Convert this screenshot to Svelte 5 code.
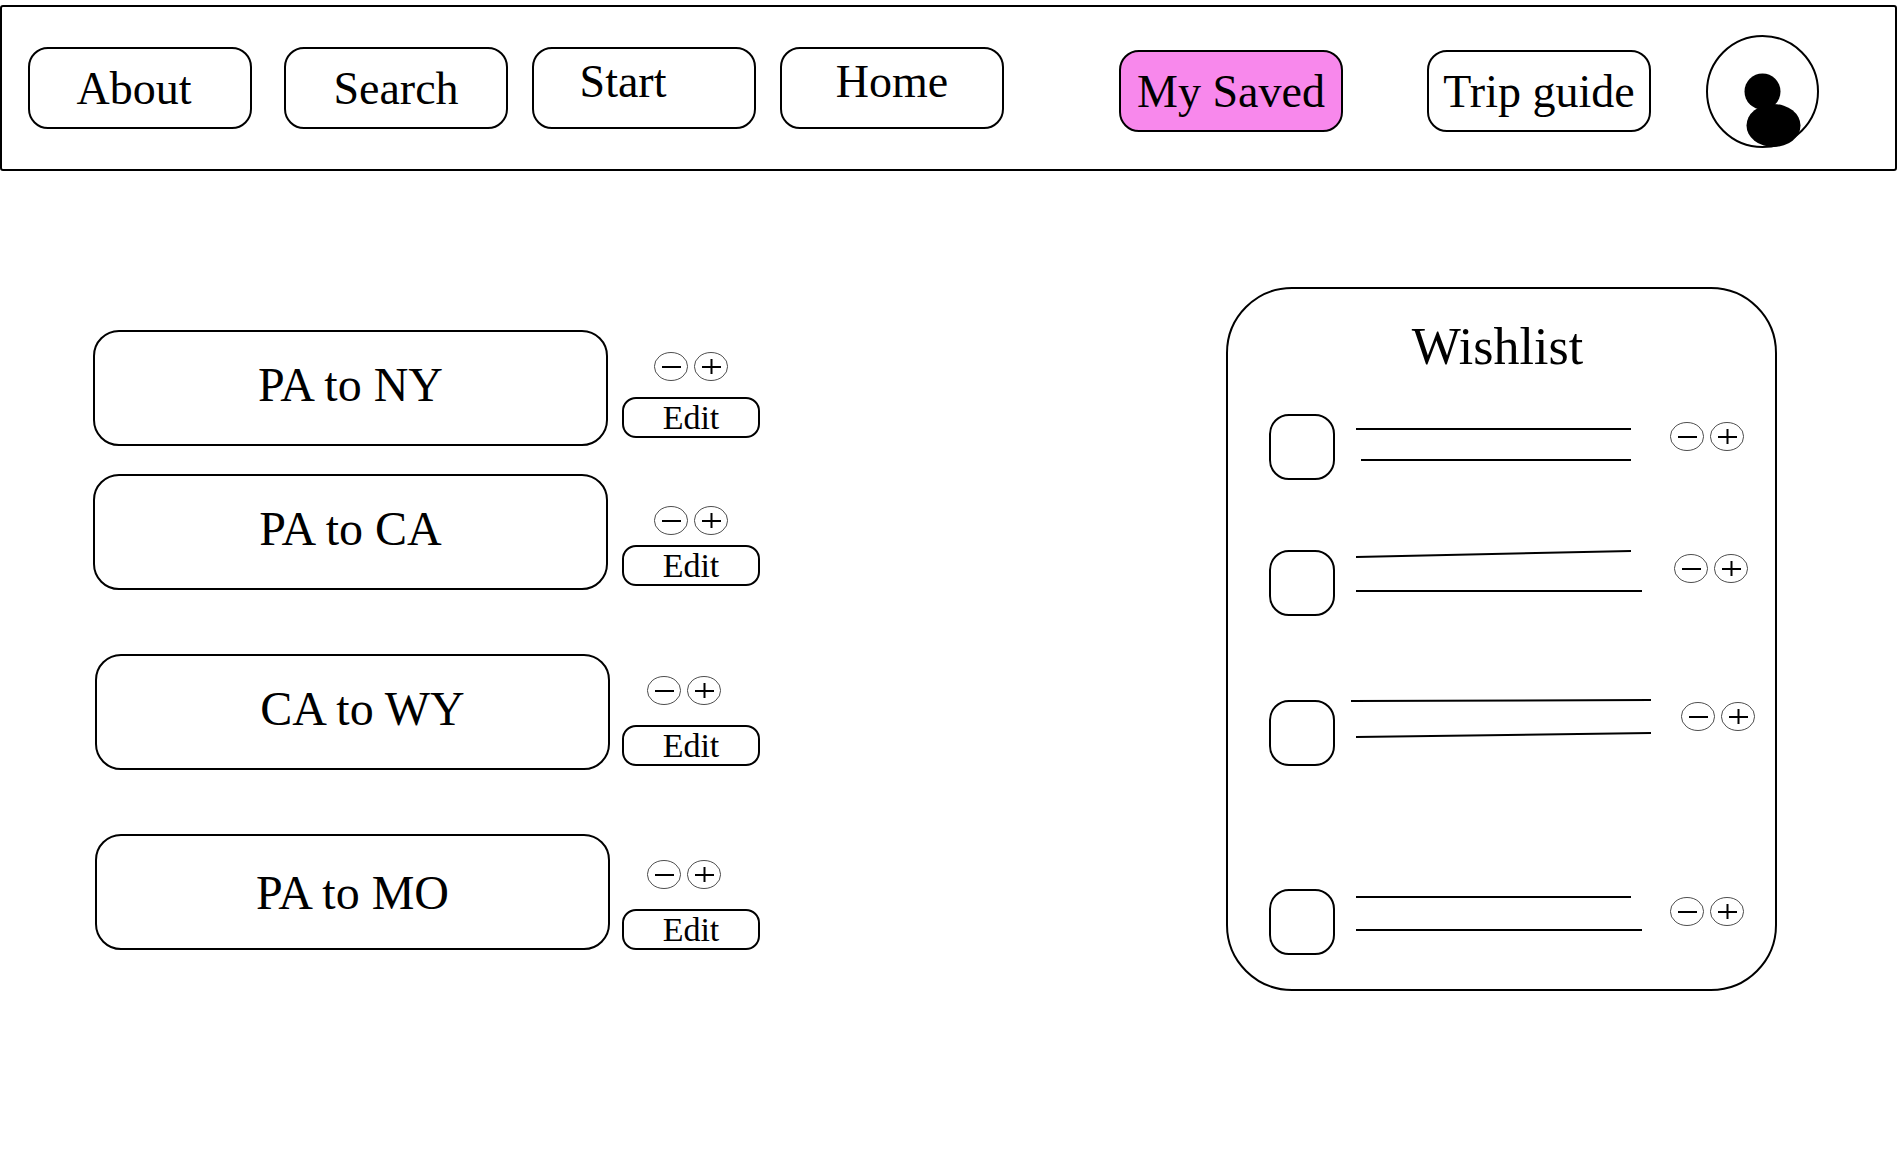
<!-- Saved trips page: route list on the left, wishlist on the right -->

<script lang="ts">
  interface NavItem {
    id: string;
    label: string;
  }

  interface Line {
    x1: number;
    y1: number;
    x2: number;
    y2: number;
  }

  interface WishItem {
    id: number;
    checked: boolean;
    lines: Line[];
  }

  const mainNav: NavItem[] = [
    { id: 'about', label: 'About' },
    { id: 'search', label: 'Search' },
    { id: 'start', label: 'Start' },
    { id: 'home', label: 'Home' }
  ];

  const tripNav: NavItem[] = [
    { id: 'saved', label: 'My Saved' },
    { id: 'guide', label: 'Trip guide' }
  ];

  const trips = ['PA to NY', 'PA to CA', 'CA to WY', 'PA to MO'];

  let activeItem = $state('saved');

  // Placeholder strokes, in the 304x66 box next to each checkbox
  let wishes = $state<WishItem[]>([
    { id: 1, checked: false, lines: [{ x1: 6, y1: 15, x2: 281, y2: 15 }, { x1: 11, y1: 46, x2: 281, y2: 46 }] },
    { id: 2, checked: false, lines: [{ x1: 6, y1: 7, x2: 281, y2: 1 }, { x1: 6, y1: 41, x2: 292, y2: 41 }] },
    { id: 3, checked: false, lines: [{ x1: 1, y1: 1, x2: 301, y2: 0 }, { x1: 6, y1: 37, x2: 301, y2: 33 }] },
    { id: 4, checked: false, lines: [{ x1: 6, y1: 8, x2: 281, y2: 8 }, { x1: 6, y1: 41, x2: 292, y2: 41 }] }
  ]);
</script>

{#snippet stepper(name: string)}
  <div class="stepper">
    <button class="step" aria-label={'Remove ' + name}>
      <svg viewBox="0 0 34 29" aria-hidden="true">
        <ellipse cx="17" cy="14.5" rx="16.6" ry="14" />
        <path d="M8 15h19" />
      </svg>
    </button>
    <button class="step" aria-label={'Add ' + name}>
      <svg viewBox="0 0 34 29" aria-hidden="true">
        <ellipse cx="17" cy="14.5" rx="16.6" ry="14" />
        <path d="M8 15h19M17.5 7v15" />
      </svg>
    </button>
  </div>
{/snippet}

{#snippet navLink(item: NavItem)}
  <a
    class="nav-link {item.id}"
    class:active={activeItem === item.id}
    href={'#' + item.id}
    onclick={() => (activeItem = item.id)}
  >{item.label}</a>
{/snippet}

<header class="topbar">
  <nav class="nav-group" aria-label="Main">
    {#each mainNav as item}
      {@render navLink(item)}
    {/each}
  </nav>
  <nav class="nav-group trip-nav" aria-label="Trips">
    {#each tripNav as item}
      {@render navLink(item)}
    {/each}
  </nav>
  <button class="avatar" aria-label="Profile">
    <svg viewBox="0 0 113 113" aria-hidden="true">
      <circle cx="56.5" cy="56.5" r="55.5" fill="#fff" stroke="#000" stroke-width="2" />
      <circle cx="56.5" cy="56.5" r="18" />
      <ellipse cx="67.5" cy="90.5" rx="27" ry="21.5" />
    </svg>
  </button>
</header>

<main>
  <ul class="trips">
    {#each trips as trip}
      <li class="trip">
        <button class="trip-name">{trip}</button>
        <div class="trip-actions">
          {@render stepper(trip)}
          <button class="edit">Edit</button>
        </div>
      </li>
    {/each}
  </ul>

  <section class="wishlist">
    <h2>Wishlist</h2>
    <ul>
      {#each wishes as wish (wish.id)}
        <li class="wish">
          <input type="checkbox" bind:checked={wish.checked} aria-label={'Wish ' + wish.id} />
          <svg class="wish-lines" viewBox="0 0 304 66" preserveAspectRatio="none" aria-hidden="true">
            {#each wish.lines as line}
              <line {...line} />
            {/each}
          </svg>
          {@render stepper('wish ' + wish.id)}
        </li>
      {/each}
    </ul>
  </section>
</main>

<style>
  :global(body) {
    background: #fff;
    color: #000;
    font-family: "Liberation Serif", "Times New Roman", serif;
  }

  button, a, input { box-sizing: border-box; }

  button {
    padding: 0;
    background: #fff;
    color: inherit;
    font-family: inherit;
    cursor: pointer;
  }

  ul {
    list-style: none;
    margin: 0;
    padding: 0;
  }

  /* Top bar */
  .topbar {
    display: flex;
    align-items: center;
    box-sizing: border-box;
    height: 166px;
    margin-top: 5px;
    padding: 0 76px 0 26px;
    border: 2px solid #000;
    border-radius: 3px;
  }

  .nav-group {
    display: flex;
    flex: 0 1 976px;
    gap: 24px;
  }

  .trip-nav {
    flex-basis: 532px;
    gap: 84px;
    margin-left: auto;
    margin-top: 6px;
  }

  .nav-link {
    display: flex;
    align-items: center;
    justify-content: center;
    flex: 0 1 224px;
    height: 82px;
    border: 2px solid #000;
    border-radius: 20px;
    color: inherit;
    font-size: 46px;
    text-decoration: none;
    white-space: nowrap;
  }

  .nav-link.about {
    margin-right: 8px;
    padding-right: 12px;
  }

  .nav-link.start, .nav-link.home { padding-bottom: 14px; }

  .nav-link.start { padding-right: 42px; }

  .nav-link.active { background: #f888ec; }

  .avatar {
    flex: none;
    width: 113px;
    height: 113px;
    margin-left: 55px;
    margin-top: 6px;
    border: none;
    border-radius: 50%;
  }

  .avatar svg { display: block; }

  /* Page body */
  main {
    display: flex;
    align-items: flex-start;
    justify-content: space-between;
    padding: 116px 120px 60px 93px;
  }

  .trips {
    flex: 0 1 667px;
    padding-top: 43px;
  }

  .trip {
    display: flex;
    gap: 14px;
  }

  .trip + .trip { margin-top: 64px; }
  .trip:nth-child(2) { margin-top: 28px; }

  .trip:nth-child(n + 3) {
    gap: 12px;
    padding-left: 2px;
  }

  .trip-name {
    flex: 1;
    height: 116px;
    border: 2px solid #000;
    border-radius: 26px;
    font-size: 48px;
  }

  .trip:nth-child(-n + 3) .trip-name { padding-bottom: 8px; }
  .trip:nth-child(3) .trip-name { padding-left: 20px; }

  .trip-actions {
    display: flex;
    flex-direction: column;
    align-items: center;
    justify-content: flex-end;
    gap: 20px;
    width: 138px;
    padding-bottom: 4px;
  }

  .trip:nth-child(1) .trip-actions { gap: 16px; padding-bottom: 8px; }
  .trip:nth-child(2) .trip-actions { gap: 10px; }
  .trip:nth-child(4) .trip-actions { padding-bottom: 0; }
  .trip:nth-child(n + 3) .stepper { margin-right: 14px; }

  .edit {
    width: 100%;
    height: 41px;
    border: 2px solid #000;
    border-radius: 14px;
    font-size: 34px;
    line-height: 36px;
  }

  .stepper {
    display: flex;
    flex: none;
    gap: 6px;
  }

  .step {
    width: 34px;
    height: 29px;
    border: none;
    border-radius: 50%;
  }

  .step svg {
    display: block;
    fill: none;
    stroke: #000;
  }

  .step ellipse { stroke-width: 0.7; }
  .step path { stroke-width: 2; }

  /* Wishlist card */
  .wishlist {
    flex: 0 1 551px;
    box-sizing: border-box;
    padding: 28px 31px 34px 41px;
    border: 2px solid #000;
    border-radius: 66px;
  }

  .wishlist h2 {
    margin: 0 0 37px;
    padding-right: 18px;
    font-size: 52px;
    font-weight: 400;
    line-height: 60px;
    text-align: center;
  }

  .wish {
    display: flex;
    align-items: flex-start;
  }

  .wish:nth-child(2) { margin-top: 70px; margin-right: -4px; }
  .wish:nth-child(3) { margin-top: 84px; margin-right: -11px; }
  .wish:nth-child(4) { margin-top: 123px; }

  .wish input {
    flex: none;
    appearance: none;
    width: 66px;
    height: 66px;
    margin: 0;
    border: 2px solid #000;
    border-radius: 20px;
    cursor: pointer;
  }

  .wish input:checked { background: #f888ec; }

  .wish-lines {
    flex: 0 1 304px;
    min-width: 0;
    height: 66px;
    margin-left: 15px;
    overflow: visible;
    stroke: #000;
    stroke-width: 2;
  }

  .wish .stepper {
    margin-top: 8px;
    margin-left: auto;
  }

  .wish:nth-child(2) .stepper { margin-top: 4px; }
  .wish:nth-child(3) .stepper { margin-top: 2px; }
</style>
